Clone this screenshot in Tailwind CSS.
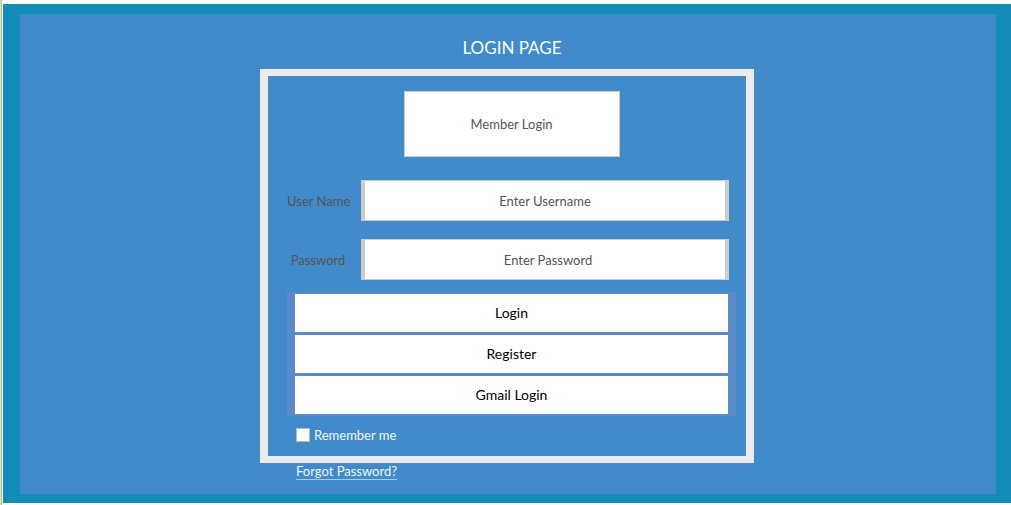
<!DOCTYPE html>
<html lang="en">
<head>
<meta charset="utf-8">
<meta name="viewport" content="width=device-width, initial-scale=1">
<title>Login Page</title>
<script src="https://cdn.jsdelivr.net/npm/@tailwindcss/browser@4"></script>
</head>
<body class="bg-white font-['Lato',sans-serif] text-[13px] leading-4">
<div class="flex min-h-screen border-l border-[#dcdcdc]">
  <div class="flex grow border-l border-[#b5cc6a] pt-1 pb-0.5 pl-px">
    <main class="flex grow flex-col items-center border-t-10 border-r-15 border-b-9 border-l-17 border-[#138cb7] bg-[#428bca] pt-6 pr-0.5 pb-2 text-white">
      <div class="w-full max-w-[494px]">
        <h1 class="pl-2.5 text-center text-[17px] leading-5">LOGIN PAGE</h1>
        <form class="mt-[11px] border-x-8 border-y-7 border-[#ebebeb] pt-[15px] pr-2.5 pb-[13px] pl-[19px]" onsubmit="return false">
          <div class="mx-auto flex h-[66px] w-[216px] items-center justify-center border border-[#ccc] bg-white text-[#555]">Member Login</div>
          <div class="mt-[23px] mr-[7px] flex items-center">
            <label for="username" class="w-[74px] pr-3 text-center whitespace-nowrap text-[#555]">User Name</label>
            <input id="username" type="text" placeholder="Enter Username" class="h-[41px] min-w-0 grow border-x-4 border-y border-[#ccc] bg-white text-center text-[#555] placeholder:text-[#555]">
          </div>
          <div class="mt-[18px] mr-[7px] flex items-center">
            <label for="password" class="w-[74px] pr-3 text-center whitespace-nowrap text-[#555]">Password</label>
            <input id="password" type="password" placeholder="Enter Password" class="h-[41px] min-w-0 grow border-x-4 border-y border-[#ccc] bg-white pl-1.5 text-center text-[#555] placeholder:text-[#555]">
          </div>
          <div class="mt-3 flex flex-col gap-[3px] bg-[#5a8aca] px-2 py-0.5 text-sm text-black">
            <button type="submit" class="h-[38px] bg-white">Login</button>
            <button type="button" class="h-[38px] bg-white">Register</button>
            <button type="button" class="h-[38px] bg-white">Gmail Login</button>
          </div>
          <div class="mt-[11px] ml-[9px] flex items-center gap-1">
            <input id="remember" type="checkbox" class="size-3.5 appearance-none border border-[#b8b8b8] bg-white checked:bg-[#138cb7]">
            <label for="remember" class="text-[#eef5fb]">Remember me</label>
          </div>
        </form>
        <a href="#" class="ml-9 inline-block border-b border-[#a5cbed] text-[#eef5fb]">Forgot Password?</a>
      </div>
    </main>
  </div>
</div>
</body>
</html>
